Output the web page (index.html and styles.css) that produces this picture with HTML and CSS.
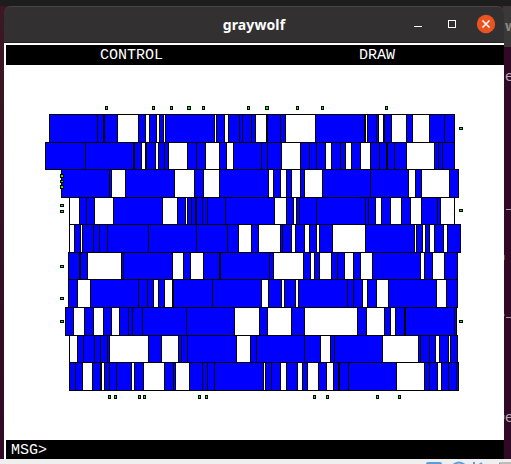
FILE: index.html
```html
<!DOCTYPE html>
<html lang="en">
<head>
<meta charset="utf-8">
<title>graywolf</title>
<link rel="stylesheet" href="styles.css">
</head>
<body>
<div class="backdrop" aria-hidden="true">
  <div class="back-title"><span>w</span></div>
  <div class="back-term">
    <span class="t1">e</span><i class="rule r1"></i><i class="speck s1"></i><i class="speck s2"></i><i class="rule r2"></i><i class="speck s3"></i><span class="t2">e</span>
  </div>
</div>
<main class="window">
  <header class="titlebar">
    <h1>graywolf</h1>
    <div class="controls">
      <svg width="12" height="12"><path d="M2 8.5h8" stroke="#fff" fill="none"/></svg>
      <svg width="12" height="12"><rect x="2.5" y="2.5" width="7" height="7" stroke="#fff" fill="none"/></svg>
      <svg class="close" width="20" height="20"><circle cx="10" cy="10" r="9.2" fill="#e95420"/><path d="M6.5 6.5l7 7M13.5 6.5l-7 7" stroke="#fff" stroke-width="1.5"/></svg>
    </div>
  </header>
  <section class="client">
    <nav class="menu"><span>CONTROL</span><span>DRAW</span></nav>
    <svg class="plot" id="plot" width="498" height="375" viewBox="6 65 498 375" shape-rendering="crispEdges"></svg>
    <footer class="msg">MSG&gt;</footer>
  </section>
</main>
<div class="dock" aria-hidden="true">
  <svg width="511" height="5" viewBox="0 459 511 5" fill="none" stroke="#5b9bd8" stroke-width="2"><path d="M427 465v-1q0-1 1-1h12q1 0 1 1v1M434 463v3M453 465q6-5 12 0M474 462v3M479 465l3-2"/><path d="M499.500 465v-2h12" stroke="#8a8a8a" stroke-width="1"/></svg>
</div>
<script src="plot.js"></script>
</body>
</html>
```

FILE: styles.css
```css
* { box-sizing: border-box; }
body {
  margin: 0;
  width: 511px;
  height: 464px;
  overflow: hidden;
  position: relative;
  display: flex;
  flex-direction: column;
  background: linear-gradient(#1d1d1d 6px, #3b1822 6px, #300a24 100%);
}
.backdrop {
  position: absolute;
  top: 6px;
  right: 0;
  width: 8px;
  height: 453px;
  overflow: hidden;
  background: #300a24;
}
.back-title {
  height: 41px;
  background: #3a3838;
  color: #8a8886;
  font: bold 14px/40px "Noto Sans", sans-serif;
  padding-left: 2px;
}
.back-term {
  position: relative;
  height: 412px;
  color: #b5a9b1;
  font: 14px/18px "DejaVu Sans Mono", monospace;
}
.back-term span, .rule, .speck { position: absolute; left: 2px; }
.t1 { top: 20px; }
.t2 { top: 361px; }
.rule { left: 3px; width: 5px; height: 1px; background: #a79aa3; }
.r1 { top: 162px; }
.r2 { top: 270px; }
.speck { left: 0; width: 2px; height: 5px; background: #6d4a3c; }
.s1 { top: 208px; }
.s2 { top: 267px; height: 2px; }
.s3 { top: 368px; height: 4px; }
.window {
  position: relative;
  margin: 6px 0 0 4px;
  width: 500px;
  height: 453px;
}
.titlebar {
  height: 37px;
  display: flex;
  align-items: center;
  position: relative;
  background: #333031;
  border-top: 1px solid #474445;
  border-bottom: 1px solid #211f20;
  border-radius: 7px 7px 0 0;
}
.titlebar h1 {
  margin: 0;
  padding-top: 1px;
  width: 100%;
  text-align: center;
  color: #fff;
  font: bold 14px/20px "Noto Sans", sans-serif;
  letter-spacing: 0.1px;
}
.controls {
  position: absolute;
  right: 8px;
  top: 7px;
  display: flex;
  align-items: center;
  gap: 22px;
}
.controls .close { margin-left: -4px; }
.client {
  height: 416px;
  padding: 2px 0 0 2px;
  background: #fff;
}
.menu, .msg {
  background: #000;
  color: #fff;
  font: 15px/20px "Liberation Mono", monospace;
}
.menu {
  height: 20px;
  display: grid;
  grid-template-columns: 251px 240px;
  text-align: center;
}
.menu span { line-height: 21px; }
.plot { display: block; background: #fff; }
.msg { height: 19px; line-height: 21px; padding-left: 5px; }
.dock { height: 5px; background: #efefef; }
.dock svg { display: block; }
.cell { fill: #00f; }
.gap { fill: #fff; }
.line, .pin { fill: #000; }
.pad { fill: #00f01c; }
```

FILE: plot.js
```js
// Cell rows: [top, bottom, edges]. Each edge is x, then "b" (cell) or "w" (gap)
// for the area on its right; "*" marks a doubled edge.
const rows = [
  [114, 142, "49b 97b 103*b 117w 138b 145w 149b 156w 159b 163w 165b 214w 216b 224w 228b 239b 242b 251b 255w 266*b 280b 285w 315b 364*w 367b 376b 378w 383*b 391w 406b 412w 429b 444b 454"],
  [142, 169, "45b 85b 133*b 141w 145*b 155w 158b 164b 168w 187b 196b 205w 219b 226w 233b 261b 267b 281w 300b 309b 316b 325w 331b 340b 345w 351b 360w 370b 379b 386*b 394b 406w 434b 438b 442b 454"],
  [169, 197, "61b 109b 111w 125b 174w 194b 203w 219b 268w 273b 280w 286b 291w 300b 304w 322b 370b 408w 415b 421w 449b 458"],
  [197, 224, "69w 79b 86b 94w 113b 162w 177b 185w 187b 191b 195*b 202b 207b 225b 274w 286b 293w 296b 299b 316b 365b 368b 375w 381b 390w 401b 410w 421b 437b 440w 454"],
  [224, 252, "69w 74b 80w 82b 93b 99b 107b 148b 196b 227b 238w 251b 258w 280b 282b 291w 295b 304w 309b 316w 319b 332w 365b 414w 416b 422w 425b 429w 434b 443w 447b 460"],
  [252, 279, "68b 79*b 87w 121b 123b 172w 183b 190w 203b 219*b 269b 273w 303b 310w 314b 319w 331b 337b 344w 353b 360w 372b 420w 424b 432w 444b 457"],
  [279, 307, "68b 77w 90b 138b 147b 153w 158b 164w 172*b 212b 261w 268b 281w 284b 295w 298b 347b 353b 362w 367b 376w 388b 436w 446b 457"],
  [307, 335, "65b 73w 84b 93w 103b 111w 119b 128b 132b 142b 186b 234w 259b 267w 291b 304w 357b 366w 384b 390w 395b 404*b 454b 456"],
  [335, 362, "69w 77b 83b 94b 100b 107b 109w 148b 161w 178b 181b 187b 236w 250b 256b 304b 320w 330b 334b 382w 418b 420b 429b 435w 439b 448w 450b 457"],
  [362, 390, "69b 75b 82w 92b 100*w 104b 109b 116b 131w 134b 143w 164b 173b 175w 189b 202b 207b 214b 263w 265b 271b 280w 286b 297w 302b 307w 318b 326w 333b 338*b 348b 396w 424b 429b 437w 441b 448b 456b 458"]
];

// I/O pins: x, y, width, height.
const pins = [
  ...[105, 152, 170, 202, 247, 296, 321, 385].map(x => [x, 106, 3, 4]),
  [187, 106, 4, 4], [265, 106, 4, 4],
  [60, 174, 4, 4], [60, 180, 4, 3], [60, 185, 4, 4],
  ...[204, 210, 265, 297, 320].map(y => [60, y, 4, 3]),
  ...[127, 209, 320].map(y => [459, y, 4, 3]),
  ...[108, 114, 138, 143, 198, 205, 313, 326, 376, 398].map(x => [x, 395, 3, 4])
];

const plot = document.getElementById("plot");
function rect(x, y, w, h, cls) {
  const r = document.createElementNS("http://www.w3.org/2000/svg", "rect");
  Object.entries({ x, y, width: w, height: h, class: cls }).forEach(([k, v]) => r.setAttribute(k, v));
  plot.appendChild(r);
}

const parsed = rows.map(([top, bottom, text]) => ({
  top, bottom,
  edges: text.split(" ").map(t => ({ x: parseInt(t, 10), w: t.includes("*") ? 2 : 1, kind: t.slice(-1) }))
}));
for (const { top, bottom, edges } of parsed) {
  for (let i = 0; i < edges.length - 1; i++) {
    rect(edges[i].x, top, edges[i + 1].x - edges[i].x, bottom - top, edges[i].kind === "b" ? "cell" : "gap");
  }
}
for (const { top, bottom, edges } of parsed) {
  const first = edges[0].x, last = edges[edges.length - 1].x;
  rect(first, top, last - first + 1, 1, "line");
  rect(first, bottom, last - first + 1, 1, "line");
  edges.forEach(e => rect(e.x, top, e.w, bottom - top + 1, "line"));
}
for (const [x, y, w, h] of pins) {
  rect(x, y, w, h, "pin");
  rect(x + 1, y + 1, w - 2, h - 2, "pad");
}
```
